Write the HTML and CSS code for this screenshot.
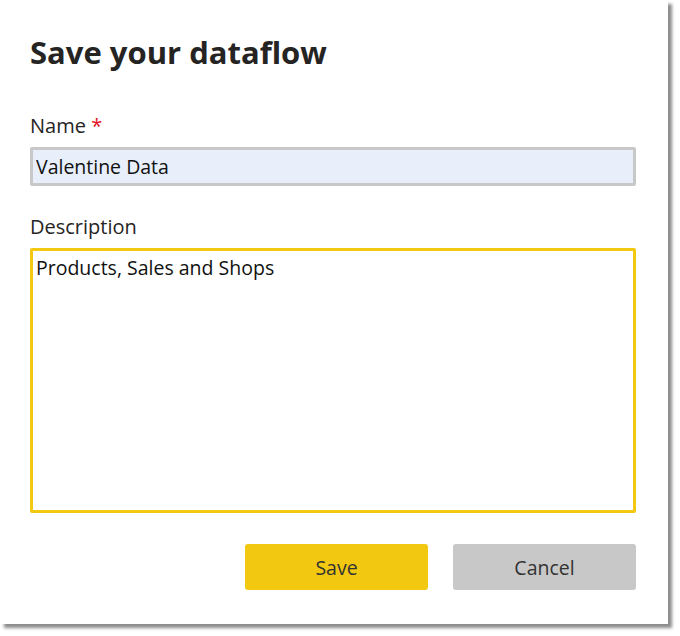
FILE: index.html
```html
<!DOCTYPE html>
<html lang="en">
<head>
  <meta charset="UTF-8" />
  <title>Save your dataflow</title>
  <link rel="stylesheet" href="styles.css">
</head>
<body>
  <div class="dialog">
    <h2>Save your dataflow</h2>
    <form class="form">
      <label for="name">Name <span class="required">*</span></label>
      <input type="text" id="name" value="Valentine Data" />

      <label for="description">Description</label>
      <textarea id="description">Products, Sales and Shops</textarea>

      <div class="actions">
        <button type="button" class="save">Save</button>
        <button type="button" class="cancel">Cancel</button>
      </div>
    </form>
  </div>
</body>
</html>
```

FILE: styles.css
```css
body {
  margin: 0;
  min-height: 636px;
  background: #ffffff;
  font-family: 'Open Sans', 'Noto Sans', sans-serif;
  color: #252423;
}

.dialog {
  box-sizing: border-box;
  width: 668px;
  height: 624px;
  padding: 30px 32px 0 30px;
  background: #ffffff;
  box-shadow: 4px 4px 3px rgba(0, 0, 0, 0.45);
}

h2 {
  margin: 0 0 41px;
  font-size: 31px;
  font-weight: 700;
  line-height: 44px;
  color: #252423;
}

.form {
  display: flex;
  flex-direction: column;
}

label {
  font-size: 20px;
  line-height: 22px;
  color: #252423;
  margin-bottom: 10px;
}

.required {
  color: #e81123;
}

input,
textarea {
  box-sizing: border-box;
  width: 100%;
  margin: 0;
  font-family: inherit;
  font-size: 19.5px;
  color: #111111;
  border-radius: 2px;
  outline: none;
}

input {
  height: 39px;
  padding: 0 3px;
  border: 3px solid #c8c8c8;
  background: #e8effb;
  margin-bottom: 30px;
}

textarea {
  height: 265px;
  padding: 4px 3px;
  border: 3px solid #f2c811;
  background: #ffffff;
  resize: none;
  line-height: 26px;
}

.actions {
  display: flex;
  justify-content: flex-end;
  gap: 25px;
  margin-top: 31px;
}

button {
  width: 183px;
  height: 46px;
  border: none;
  border-radius: 3px;
  font-family: inherit;
  font-size: 19.5px;
  color: #333333;
}

.save {
  background: #f2c811;
}

.cancel {
  background: #c8c8c8;
}
```
